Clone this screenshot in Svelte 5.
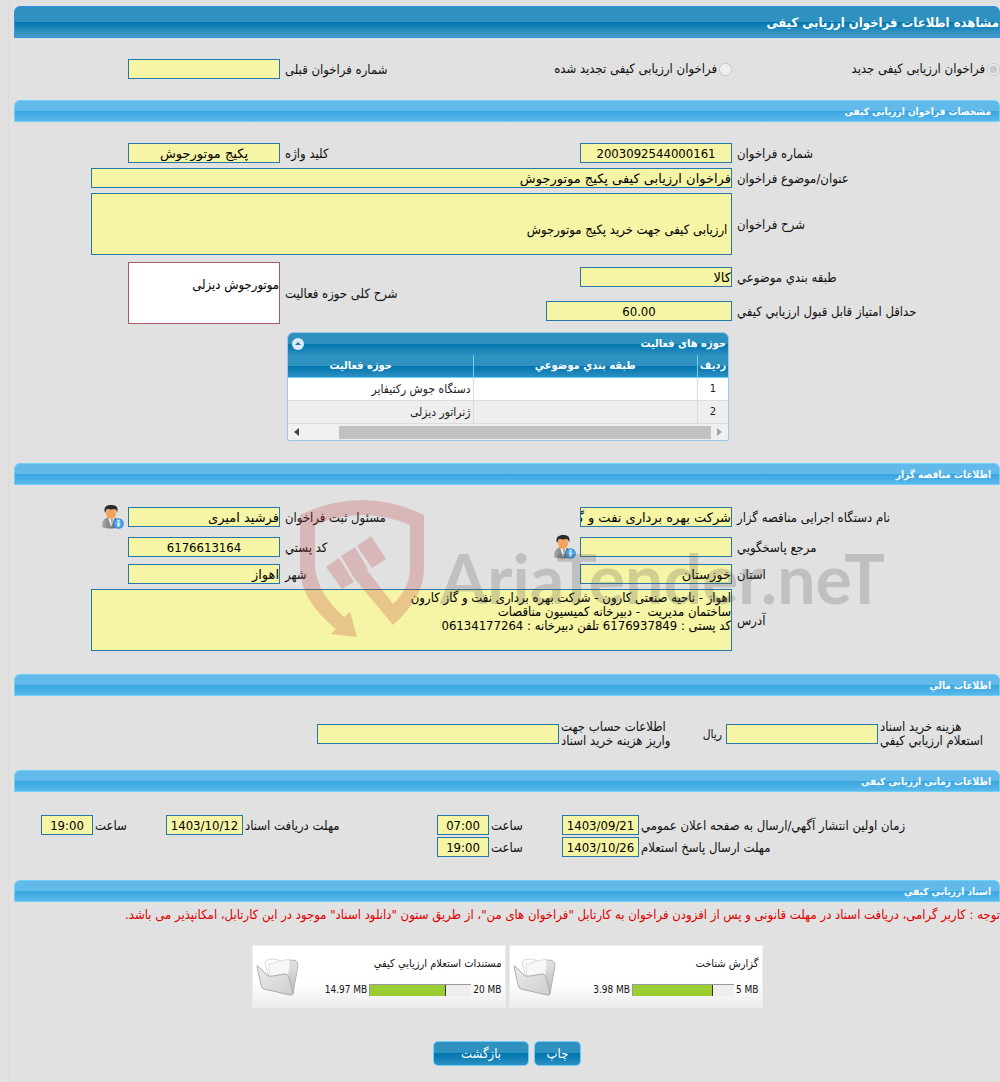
<script>
  const categories = [
    { id: 1, category: '', activity: 'دستگاه جوش رکتیفایر' },
    { id: 2, category: '', activity: 'ژنراتور دیزلی' }
  ];
  const documents = [
    { title: 'گزارش شناخت', used: 3.98, total: 5 },
    { title: 'مستندات استعلام ارزيابي کيفي', used: 14.97, total: 20 }
  ];
  const address =
    'اهواز - ناحیه صنعتی کارون - شرکت بهره برداری نفت و گاز کارون\n' +
    'ساختمان مدیریت  - دبیرخانه کمیسیون مناقصات\n' +
    'کد پستی : 6176937849 تلفن دبیرخانه : 06134177264';
</script>

{#snippet personIcon()}
  <svg width="23" height="24" viewBox="0 0 23 24" aria-hidden="true">
    <defs>
      <linearGradient id="suit" x1="0" x2="1"><stop offset="0" stop-color="#aaa" /><stop offset="1" stop-color="#555" /></linearGradient>
      <radialGradient id="info"><stop offset="0" stop-color="#7cc8f5" /><stop offset="1" stop-color="#2f8bd8" /></radialGradient>
    </defs>
    <path d="M1 22c0-6 2-9 7-10h4c5 1 6 4 6 10-5 2-12 2-17 0z" fill="url(#suit)" />
    <path d="M7 12l3 10 4-10z" fill="#f4f4f4" />
    <path d="M10 14l1 8 1-8z" fill="#999" />
    <ellipse cx="10" cy="8" rx="5" ry="6" fill="#f2a35c" />
    <path d="M4 8C2 2 6 0 10 0s8 1 6 8c0-2-1-4-3-4-3 1-6 0-7 0-1 1-1 2-2 4z" fill="#2b2b2b" />
    <circle cx="17.5" cy="18.5" r="5.3" fill="url(#info)" />
    <path d="M16.5 17.5h2v4h-2zM16.5 14.800h2v1.800h-2z" fill="#fff" />
  </svg>
{/snippet}

{#snippet folderIcon()}
  <svg width="44" height="40" viewBox="-1 -1 44 40" aria-hidden="true">
    <defs>
      <linearGradient id="front" x1="0" y1="0" x2="1" y2="1"><stop offset="0" stop-color="#ececec" /><stop offset="1" stop-color="#cdcdcd" /></linearGradient>
      <linearGradient id="rear" x1="0" y1="0" x2="0" y2="1"><stop offset="0" stop-color="#e2e2e2" /><stop offset="1" stop-color="#bcbcbc" /></linearGradient>
    </defs>
    <path d="M26 4L34 2q7 0 7 5L36 36 30 30z" fill="url(#rear)" stroke="#b4b4b4" />
    <path d="M8 4Q10 1 16 1L30 4 30 18 12 20z" fill="#fff" stroke="#d8d8d8" />
    <path d="M12 6L32 1 33 6 31 19 13 20z" fill="#f7f7f7" stroke="#e0e0e0" />
    <path d="M0 8q0-1 3 2l7 7q2 2 6 1l12-2q3 0 4 3l4 16q0 3-3 2L7 31q-2 0-3-4z" fill="url(#front)" stroke="#ababab" />
  </svg>
{/snippet}

<main dir="rtl">
  <h1>مشاهده اطلاعات فراخوان ارزیابی کیفی</h1>

  <section class="cols types">
    <label class="radio"><input type="radio" name="kind" checked disabled />فراخوان ارزیابی کیفی جدید</label>
    <div class="pair">
      <label class="radio"><input type="radio" name="kind" disabled />فراخوان ارزیابی کیفی تجدید شده</label>
      <label class="cap" for="prev">شماره فراخوان قبلی</label>
    </div>
    <input id="prev" class="mid" readonly />
  </section>

  <h2>مشخصات فراخوان ارزیابی کیفی</h2>
  <section class="stack">
    <div class="cols">
      <label class="cap" for="num">شماره فراخوان</label>
      <div class="pair">
        <input id="num" class="mid digits" readonly value="2003092544000161" />
        <label class="cap" for="key">کلید واژه</label>
      </div>
      <input id="key" class="mid" readonly value="پکیج موتورجوش" />
    </div>
    <div class="cols">
      <label class="cap" for="subject">عنوان/موضوع فراخوان</label>
      <input id="subject" class="wide" readonly value="فراخوان ارزیابی کیفی پکیج موتورجوش" />
    </div>
    <div class="cols">
      <label class="cap" for="desc">شرح فراخوان</label>
      <textarea id="desc" class="wide desc" readonly value={'\n\n ارزیابی کیفی جهت خرید پکیج موتورجوش'}></textarea>
    </div>
    <div class="cols scope">
      <div class="lines">
        <label class="cap" for="cat">طبقه بندي موضوعي</label>
        <label class="cap" for="score">حداقل امتياز قابل قبول ارزيابي کيفي</label>
      </div>
      <div class="pair">
        <div class="lines">
          <input id="cat" readonly value="کالا" />
          <input id="score" class="score mid digits" readonly value="60.00" />
        </div>
        <label class="cap" for="scope">شرح کلی حوزه فعالیت</label>
      </div>
      <textarea id="scope" class="white" readonly value={'\nموتورجوش دیزلی'}></textarea>
    </div>
    <div class="cols">
      <div class="grid-box">
        <div class="grid-title">
          <span>حوزه های فعالیت</span>
          <button class="fold" aria-label="بستن">
            <svg width="12" height="12" viewBox="0 0 12 12"><circle cx="6" cy="6" r="6" fill="#dcebf7" /><path d="M3 7h6L6 4z" fill="#1b77a8" /></svg>
          </button>
        </div>
        <table>
          <thead>
            <tr><th class="idx">ردیف</th><th>طبقه بندي موضوعي</th><th>حوزه فعالیت</th></tr>
          </thead>
          <tbody>
            {#each categories as row}
              <tr><td class="idx">{row.id}</td><td>{row.category}</td><td>{row.activity}</td></tr>
            {/each}
          </tbody>
        </table>
        <div class="scroll">
          <svg width="5" height="8" viewBox="0 0 5 8"><path d="M0 0v8l5-4z" fill="#a3a3a3" /></svg>
          <div class="thumb"></div>
          <svg width="5" height="8" viewBox="0 0 5 8"><path d="M5 0v8L0 4z" fill="#444" /></svg>
        </div>
      </div>
    </div>
  </section>

  <h2>اطلاعات مناقصه گزار</h2>
  <section class="stack owner">
    <div class="cols">
      <label class="cap" for="org">نام دستگاه اجرایی مناقصه گزار</label>
      <div class="pair">
        <input id="org" readonly value="شرکت بهره برداری نفت و گاز کارون" />
        <label class="cap" for="resp">مسئول ثبت فراخوان</label>
      </div>
      <div class="with-icon">
        <input id="resp" readonly value="فرشید امیری" />
        {@render personIcon()}
      </div>
    </div>
    <div class="cols">
      <label class="cap" for="ref">مرجع پاسخگويي</label>
      <div class="pair">
        <div class="with-icon">
          <input id="ref" readonly />
          {@render personIcon()}
        </div>
        <label class="cap" for="zip">کد پستي</label>
      </div>
      <input id="zip" class="mid digits" readonly value="6176613164" />
    </div>
    <div class="cols">
      <label class="cap" for="state">استان</label>
      <div class="pair">
        <input id="state" readonly value="خوزستان" />
        <label class="cap" for="city">شهر</label>
      </div>
      <input id="city" readonly value="اهواز" />
    </div>
    <div class="cols">
      <label class="cap" for="addr">آدرس</label>
      <textarea id="addr" class="wide" readonly value={address}></textarea>
    </div>
    <div class="watermark" dir="ltr" aria-hidden="true">
      <svg width="126" height="140" viewBox="0 0 126 140">
        <path d="M0 15Q62-15 124 15V68Q124 98 93 125L54 78 67 70 93 104Q110 88 110 68V25Q62 5 15 25V68Q18 94 44 117L50 112 57 137 31 134 36 129Q0 100 0 68Z" />
        <path d="M26 67l13-9 15 24-12 7zM41 56l14-9 13 22-14 9zM57 46l14-10 15 23-14 9z" />
      </svg>
      <span>AriaTender.neT</span>
    </div>
  </section>

  <h2>اطلاعات مالي</h2>
  <section class="money">
    <label class="cap" for="fee">هزینه خرید اسناد<br />استعلام ارزيابي کيفي</label>
    <div class="pair">
      <span class="unit"><input id="fee" readonly />ریال</span>
      <label class="cap" for="acc">اطلاعات حساب جهت<br />واریز هزینه خرید اسناد</label>
    </div>
    <input id="acc" class="acc" readonly />
  </section>

  <h2>اطلاعات زمانی ارزیابی کیفی</h2>
  <section class="times">
    <label class="cap" for="d1">زمان اولين انتشار آگهي/ارسال به صفحه اعلان عمومي</label>
    <div class="pair"><input id="d1" class="date digits" readonly value="1403/09/21" /><label class="cap" for="t1">ساعت</label></div>
    <div class="pair"><input id="t1" class="time digits" readonly value="07:00" /><label class="cap" for="d2">مهلت دريافت اسناد</label></div>
    <div class="pair"><input id="d2" class="date digits" readonly value="1403/10/12" /><label class="cap" for="t2">ساعت</label></div>
    <input id="t2" class="time digits" readonly value="19:00" />
    <label class="cap" for="d3">مهلت ارسال پاسخ استعلام</label>
    <div class="pair"><input id="d3" class="date digits" readonly value="1403/10/26" /><label class="cap" for="t3">ساعت</label></div>
    <input id="t3" class="time digits" readonly value="19:00" />
  </section>

  <h2>اسناد ارزيابي کيفي</h2>
  <p class="note">توجه : کاربر گرامی، دریافت اسناد در مهلت قانونی و پس از افزودن فراخوان به کارتابل "فراخوان های من"، از طریق ستون "دانلود اسناد" موجود در این کارتابل، امکانپذیر می باشد.</p>

  <div class="cards">
    {#each documents as doc}
      <article>
        <div class="info">
          <span>{doc.title}</span>
          <div class="usage" dir="ltr">
            <span>{doc.used} MB</span>
            <div class="bar"><div class="fill" style="width: {(doc.used / doc.total) * 100}%"></div></div>
            <span>{doc.total} MB</span>
          </div>
        </div>
        {@render folderIcon()}
      </article>
    {/each}
  </div>

  <div class="actions">
    <button class="btn">چاپ</button>
    <button class="btn back">بازگشت</button>
  </div>
</main>

<style>
  :global(body) {
    background: #e1e1e1;
  }
  main {
    box-sizing: border-box;
    margin: 1px 0 0 8px;
    padding: 4px 0 15px 5px;
    border: 1px solid #dcdcdc;
    border-right: 0;
    overflow: hidden;
    font: 12px/14px 'DejaVu Sans Condensed', 'DejaVu Sans', sans-serif;
    color: #111;
  }
  h1, h2 {
    box-sizing: border-box;
    margin: 0;
    border: 1px solid #6fd0f7;
    border-radius: 6px 6px 0 0;
    color: #fff;
    font-weight: bold;
  }
  h1 {
    height: 32px;
    border-color: #2e93e4;
    background: linear-gradient(#2e91c0 50%, #0076ae 50%, #4a9fca);
    font-size: 13px;
    line-height: 31px;
  }
  h2 {
    height: 22px;
    padding-right: 8px;
    background: linear-gradient(#62baea 50%, #37a5e0 50%, #5bb8ea);
    font-size: 10px;
    line-height: 21px;
  }
  .cols {
    display: grid;
    grid-template-columns: 268fr 452fr 266fr;
    align-items: center;
  }
  .types {
    padding: 21px 0;
  }
  .stack {
    display: grid;
    gap: 5px;
    padding: 21px 0 22px;
  }
  .radio {
    display: flex;
    align-items: center;
    gap: 2px;
    font-size: 13px;
    line-height: 16px;
  }
  .radio input {
    width: 13px;
    height: 13px;
    margin: 0;
  }
  .pair {
    display: flex;
    align-items: center;
    justify-content: space-between;
  }
  .cap {
    padding: 1px 0 0 5px;
    font-size: 13px;
    text-align: left;
    white-space: nowrap;
  }
  input, textarea {
    box-sizing: border-box;
    width: 152px;
    height: 20px;
    margin: 0;
    padding: 1px 0;
    border: 1px solid #2478a8;
    border-radius: 0;
    outline: 0;
    background: #f6f4a5;
    color: #000;
    font: 13px/16px 'DejaVu Sans', sans-serif;
  }
  .digits, textarea {
    font-family: 'DejaVu Sans Condensed', 'DejaVu Sans', sans-serif;
  }
  textarea {
    display: block;
    height: 62px;
    resize: none;
    overflow: hidden;
    line-height: 14px;
  }
  .mid {
    text-align: center;
  }
  .wide {
    grid-column: 2 / 4;
    width: 641px;
  }
  .white {
    border-color: #a85b63;
    background: #fff;
  }
  .scope {
    padding: 2px 0 3px;
  }
  .lines {
    display: grid;
    gap: 14px;
    margin-top: 2px;
  }
  .lines .cap {
    line-height: 19px;
  }
  .score {
    width: 186px;
  }
  .grid-box {
    grid-column: 2;
    box-sizing: border-box;
    width: 442px;
    margin: 0 3px 0 0;
    border: 1px solid #9cc8e6;
    border-radius: 6px 6px 2px 2px;
    overflow: hidden;
    background: #f0f0f0;
  }
  .grid-title {
    display: flex;
    align-items: center;
    justify-content: space-between;
    height: 22px;
    padding: 0 2px 0 4px;
    background: linear-gradient(#2e91c0 50%, #0076ae 50%, #2d8fc2);
    color: #fff;
    font-size: 11px;
    font-weight: bold;
  }
  .fold {
    display: flex;
    padding: 0;
    border: 0;
    background: none;
  }
  table {
    width: 480px;
    border-collapse: collapse;
    table-layout: fixed;
  }
  th {
    height: 22px;
    padding: 0;
    border-bottom: 1px solid #6fd0f7;
    border-left: 1px solid #6fd0f7;
    background: linear-gradient(#2e91c0 50%, #0076ae 50%, #2d8fc2);
    color: #fff;
    font-size: 11px;
    white-space: nowrap;
  }
  td {
    height: 22px;
    padding: 0 2px;
    border-bottom: 1px solid #dcdcdc;
    border-left: 1px solid #dcdcdc;
    background: #fff;
    color: #222;
  }
  tr:nth-child(2) td {
    background: #eee;
  }
  .idx {
    width: 30px;
    padding: 0;
    text-align: center;
  }
  td.idx {
    font-size: 11px;
  }
  .scroll {
    display: flex;
    align-items: center;
    justify-content: space-between;
    height: 16px;
    padding: 0 6px;
  }
  .thumb {
    width: 372px;
    height: 13px;
    margin: 0 6px 0 auto;
    background: #c1c1c1;
  }
  .owner {
    position: relative;
    padding: 19px 0 23px;
  }
  .owner .cols:first-child {
    min-height: 26px;
  }
  .with-icon {
    display: flex;
    align-items: center;
    gap: 4px;
  }
  .watermark {
    position: absolute;
    top: 15px;
    right: 100px;
    display: flex;
    gap: 14px;
    width: 600px;
    color: rgba(80, 80, 80, 0.23);
    fill: rgba(190, 50, 60, 0.24);
    pointer-events: none;
  }
  .watermark svg {
    flex: none;
  }
  .watermark span {
    font: bold 68px/156px Lato, 'Liberation Sans', sans-serif;
    white-space: nowrap;
  }
  .money {
    display: grid;
    grid-template-columns: 122fr 319fr 545fr;
    align-items: center;
    padding: 24px 0 22px;
  }
  .money .cap {
    padding: 0 0 0 2px;
  }
  .times .cap {
    padding-left: 2px;
  }
  .unit {
    display: flex;
    align-items: center;
    gap: 4px;
  }
  .acc {
    width: 242px;
  }
  .times {
    display: grid;
    grid-template-columns: 361fr 150fr 246fr 150fr 79fr;
    row-gap: 2px;
    align-items: center;
    padding: 23px 0;
  }
  .date {
    width: 77px;
    text-align: center;
  }
  .time {
    width: 52px;
    text-align: center;
  }
  .note {
    margin: 6px 0 23px;
    color: #e00000;
    font-size: 13px;
    white-space: nowrap;
  }
  .cards {
    display: flex;
    justify-content: center;
    gap: 3px;
  }
  article {
    box-sizing: border-box;
    display: flex;
    justify-content: space-between;
    align-items: center;
    width: 254px;
    height: 63px;
    padding: 0 3px;
    border: 1px solid #eee;
    background: linear-gradient(#fff 60%, #ececec);
    font-size: 11px;
  }
  .info {
    display: grid;
    gap: 12px;
  }
  .usage {
    display: flex;
    justify-content: flex-end;
    align-items: center;
    gap: 2px;
    font-size: 10px;
  }
  .bar {
    box-sizing: border-box;
    width: 102px;
    height: 12px;
    border-top: 1px solid #999;
    border-left: 1px solid #999;
    background: #eee;
  }
  .fill {
    box-sizing: border-box;
    height: 11px;
    border-right: 1px solid #333;
    background: #9acd32;
  }
  .actions {
    display: flex;
    justify-content: center;
    gap: 5px;
    margin-top: 33px;
  }
  .btn {
    width: 47px;
    height: 25px;
    padding: 0;
    border: 1px solid #6fd0f7;
    border-radius: 5px;
    background: linear-gradient(#2e91c0 50%, #0076ae 50%, #2d8fc2);
    color: #fff;
    font: 13px/20px 'DejaVu Sans Condensed', 'DejaVu Sans', sans-serif;
  }
  .back {
    width: 96px;
  }
</style>
